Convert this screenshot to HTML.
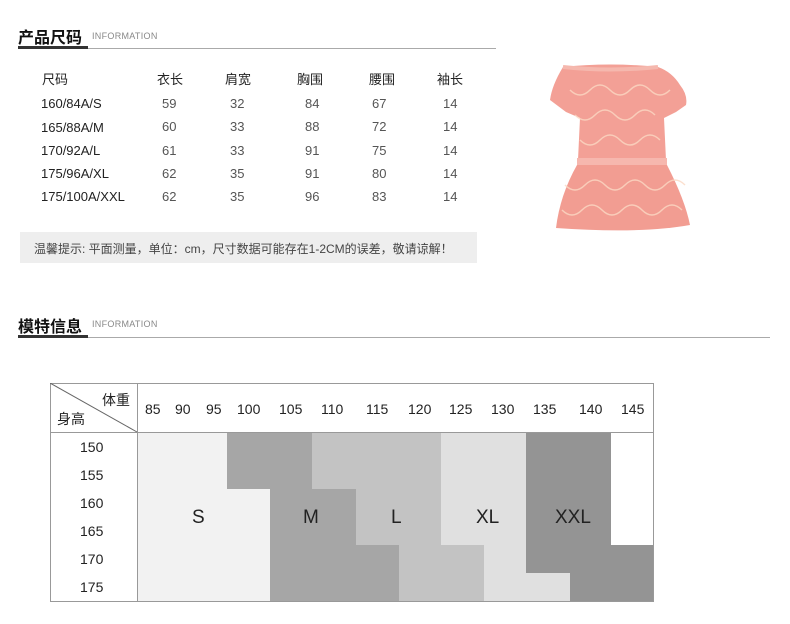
<!DOCTYPE html>
<html><head><meta charset="utf-8"><style>
*{margin:0;padding:0;box-sizing:border-box}
body{width:790px;height:624px;background:#fff;position:relative;overflow:hidden;font-family:"Liberation Sans","Noto Sans CJK SC",sans-serif;color:#222}
.a{position:absolute;white-space:nowrap}
.t{font-size:16px;font-weight:bold;color:#111}
.inf{font-size:9px;color:#888;letter-spacing:0.3px}
.h{font-size:13px;color:#222}
.n{font-size:13px;color:#555}
.s{font-size:13px;color:#222}
.g{position:absolute}
.c{font-size:14px;color:#222;position:absolute;white-space:nowrap}
</style></head><body>
<div class="a t" style="left:18px;top:24px">产品尺码</div>
<div class="a inf" style="left:92px;top:31px">INFORMATION</div>
<div class="g" style="left:18px;top:46px;width:70px;height:3px;background:#333"></div>
<div class="g" style="left:88px;top:48px;width:408px;height:1px;background:#aaa"></div>

<div class="a h" style="left:42px;top:69px">尺码</div>
<div class="a h" style="left:157px;top:69px">衣长</div>
<div class="a h" style="left:225px;top:69px">肩宽</div>
<div class="a h" style="left:297px;top:69px">胸围</div>
<div class="a h" style="left:369px;top:69px">腰围</div>
<div class="a h" style="left:437px;top:69px">袖长</div>

<div class="a s" style="left:41px;top:96px">160/84A/S</div>
<div class="a s" style="left:41px;top:120px">165/88A/M</div>
<div class="a s" style="left:41px;top:143px">170/92A/L</div>
<div class="a s" style="left:41px;top:166px">175/96A/XL</div>
<div class="a s" style="left:41px;top:189px">175/100A/XXL</div>
<div class="a n" style="left:162px;top:92px;line-height:23.3px">59<br>60<br>61<br>62<br>62</div>
<div class="a n" style="left:230px;top:92px;line-height:23.3px">32<br>33<br>33<br>35<br>35</div>
<div class="a n" style="left:305px;top:92px;line-height:23.3px">84<br>88<br>91<br>91<br>96</div>
<div class="a n" style="left:372px;top:92px;line-height:23.3px">67<br>72<br>75<br>80<br>83</div>
<div class="a n" style="left:443px;top:92px;line-height:23.3px">14<br>14<br>14<br>14<br>14</div>

<div class="g" style="left:20px;top:232px;width:457px;height:31px;background:#eee"></div>
<div class="a" style="left:34px;top:240px;font-size:12px;color:#444">温馨提示: 平面测量，单位：cm，尺寸数据可能存在1-2CM的误差，敬请谅解！</div>

<svg class="g" style="left:540px;top:60px" width="150" height="175" viewBox="540 60 150 175">
<path d="M563 67 Q610 62 658 67 Q672 72 680 85 Q688 95 686 105 L676 112 L664 118 L666 160 L578 160 L580 118 L566 112 L550 100 Q552 85 563 67 Z" fill="#f3a096"/>
<path d="M563 67 Q610 72 658 67" stroke="#f5b8ae" stroke-width="4" fill="none"/>
<rect x="577" y="158" width="90" height="7" fill="#f6b7ae"/>
<path d="M577 165 L667 165 Q685 200 690 225 Q640 234 556 228 Q560 195 577 165 Z" fill="#f29d92"/>
<g stroke="#fbd9c4" stroke-width="1.5" fill="none" opacity="0.8">
<path d="M570 90 q10 10 20 0 t20 0 t20 0 t20 0 t20 0"/>
<path d="M575 115 q10 10 20 0 t20 0 t20 0 t20 0"/>
<path d="M580 140 q10 10 20 0 t20 0 t20 0 t20 0"/>
<path d="M565 185 q10 10 20 0 t20 0 t20 0 t20 0 t20 0 t20 0"/>
<path d="M562 210 q10 10 20 0 t20 0 t20 0 t20 0 t20 0 t20 0"/>
</g>
</svg>

<div class="a t" style="left:18px;top:313px">模特信息</div>
<div class="a inf" style="left:92px;top:319px">INFORMATION</div>
<div class="g" style="left:18px;top:335px;width:70px;height:3px;background:#333"></div>
<div class="g" style="left:88px;top:337px;width:682px;height:1px;background:#aaa"></div>

<div class="g" style="left:50px;top:383px;width:604px;height:219px;border:1px solid #999"></div>
<div class="g" style="left:137px;top:383px;width:1px;height:219px;background:#999"></div>
<div class="g" style="left:50px;top:432px;width:604px;height:1px;background:#999"></div>
<svg class="g" style="left:50px;top:383px" width="88" height="50"><line x1="0" y1="0" x2="87" y2="49" stroke="#666" stroke-width="1"/></svg>
<div class="c" style="left:102px;top:390px">体重</div>
<div class="c" style="left:57px;top:409px">身高</div>
<div class="c" style="left:145px;top:401px">85</div>
<div class="c" style="left:175px;top:401px">90</div>
<div class="c" style="left:206px;top:401px">95</div>
<div class="c" style="left:237px;top:401px">100</div>
<div class="c" style="left:279px;top:401px">105</div>
<div class="c" style="left:321px;top:401px">110</div>
<div class="c" style="left:366px;top:401px">115</div>
<div class="c" style="left:408px;top:401px">120</div>
<div class="c" style="left:449px;top:401px">125</div>
<div class="c" style="left:491px;top:401px">130</div>
<div class="c" style="left:533px;top:401px">135</div>
<div class="c" style="left:579px;top:401px">140</div>
<div class="c" style="left:621px;top:401px">145</div>

<svg class="g" style="left:0;top:0" width="790" height="624">
<path d="M138 433 H227 V489 H270 V601 H138 Z" fill="#f2f2f2"/>
<path d="M227 433 H312 V489 H356 V545 H399 V601 H270 V489 H227 Z" fill="#a6a6a6"/>
<path d="M312 433 H441 V545 H484 V601 H399 V545 H356 V489 H312 Z" fill="#c3c3c3"/>
<path d="M441 433 H526 V573 H570 V601 H484 V545 H441 Z" fill="#e0e0e0"/>
<path d="M526 433 H611 V545 H653 V601 H570 V573 H526 Z" fill="#949494"/>
</svg>
<div class="c" style="left:80px;top:439px">150</div>
<div class="c" style="left:80px;top:467px">155</div>
<div class="c" style="left:80px;top:495px">160</div>
<div class="c" style="left:80px;top:523px">165</div>
<div class="c" style="left:80px;top:551px">170</div>
<div class="c" style="left:80px;top:579px">175</div>
<div class="c" style="left:192px;top:507px;font-size:19px">S</div>
<div class="c" style="left:303px;top:507px;font-size:19px">M</div>
<div class="c" style="left:391px;top:507px;font-size:19px">L</div>
<div class="c" style="left:476px;top:507px;font-size:19px">XL</div>
<div class="c" style="left:555px;top:507px;font-size:19px">XXL</div>
</body></html>
